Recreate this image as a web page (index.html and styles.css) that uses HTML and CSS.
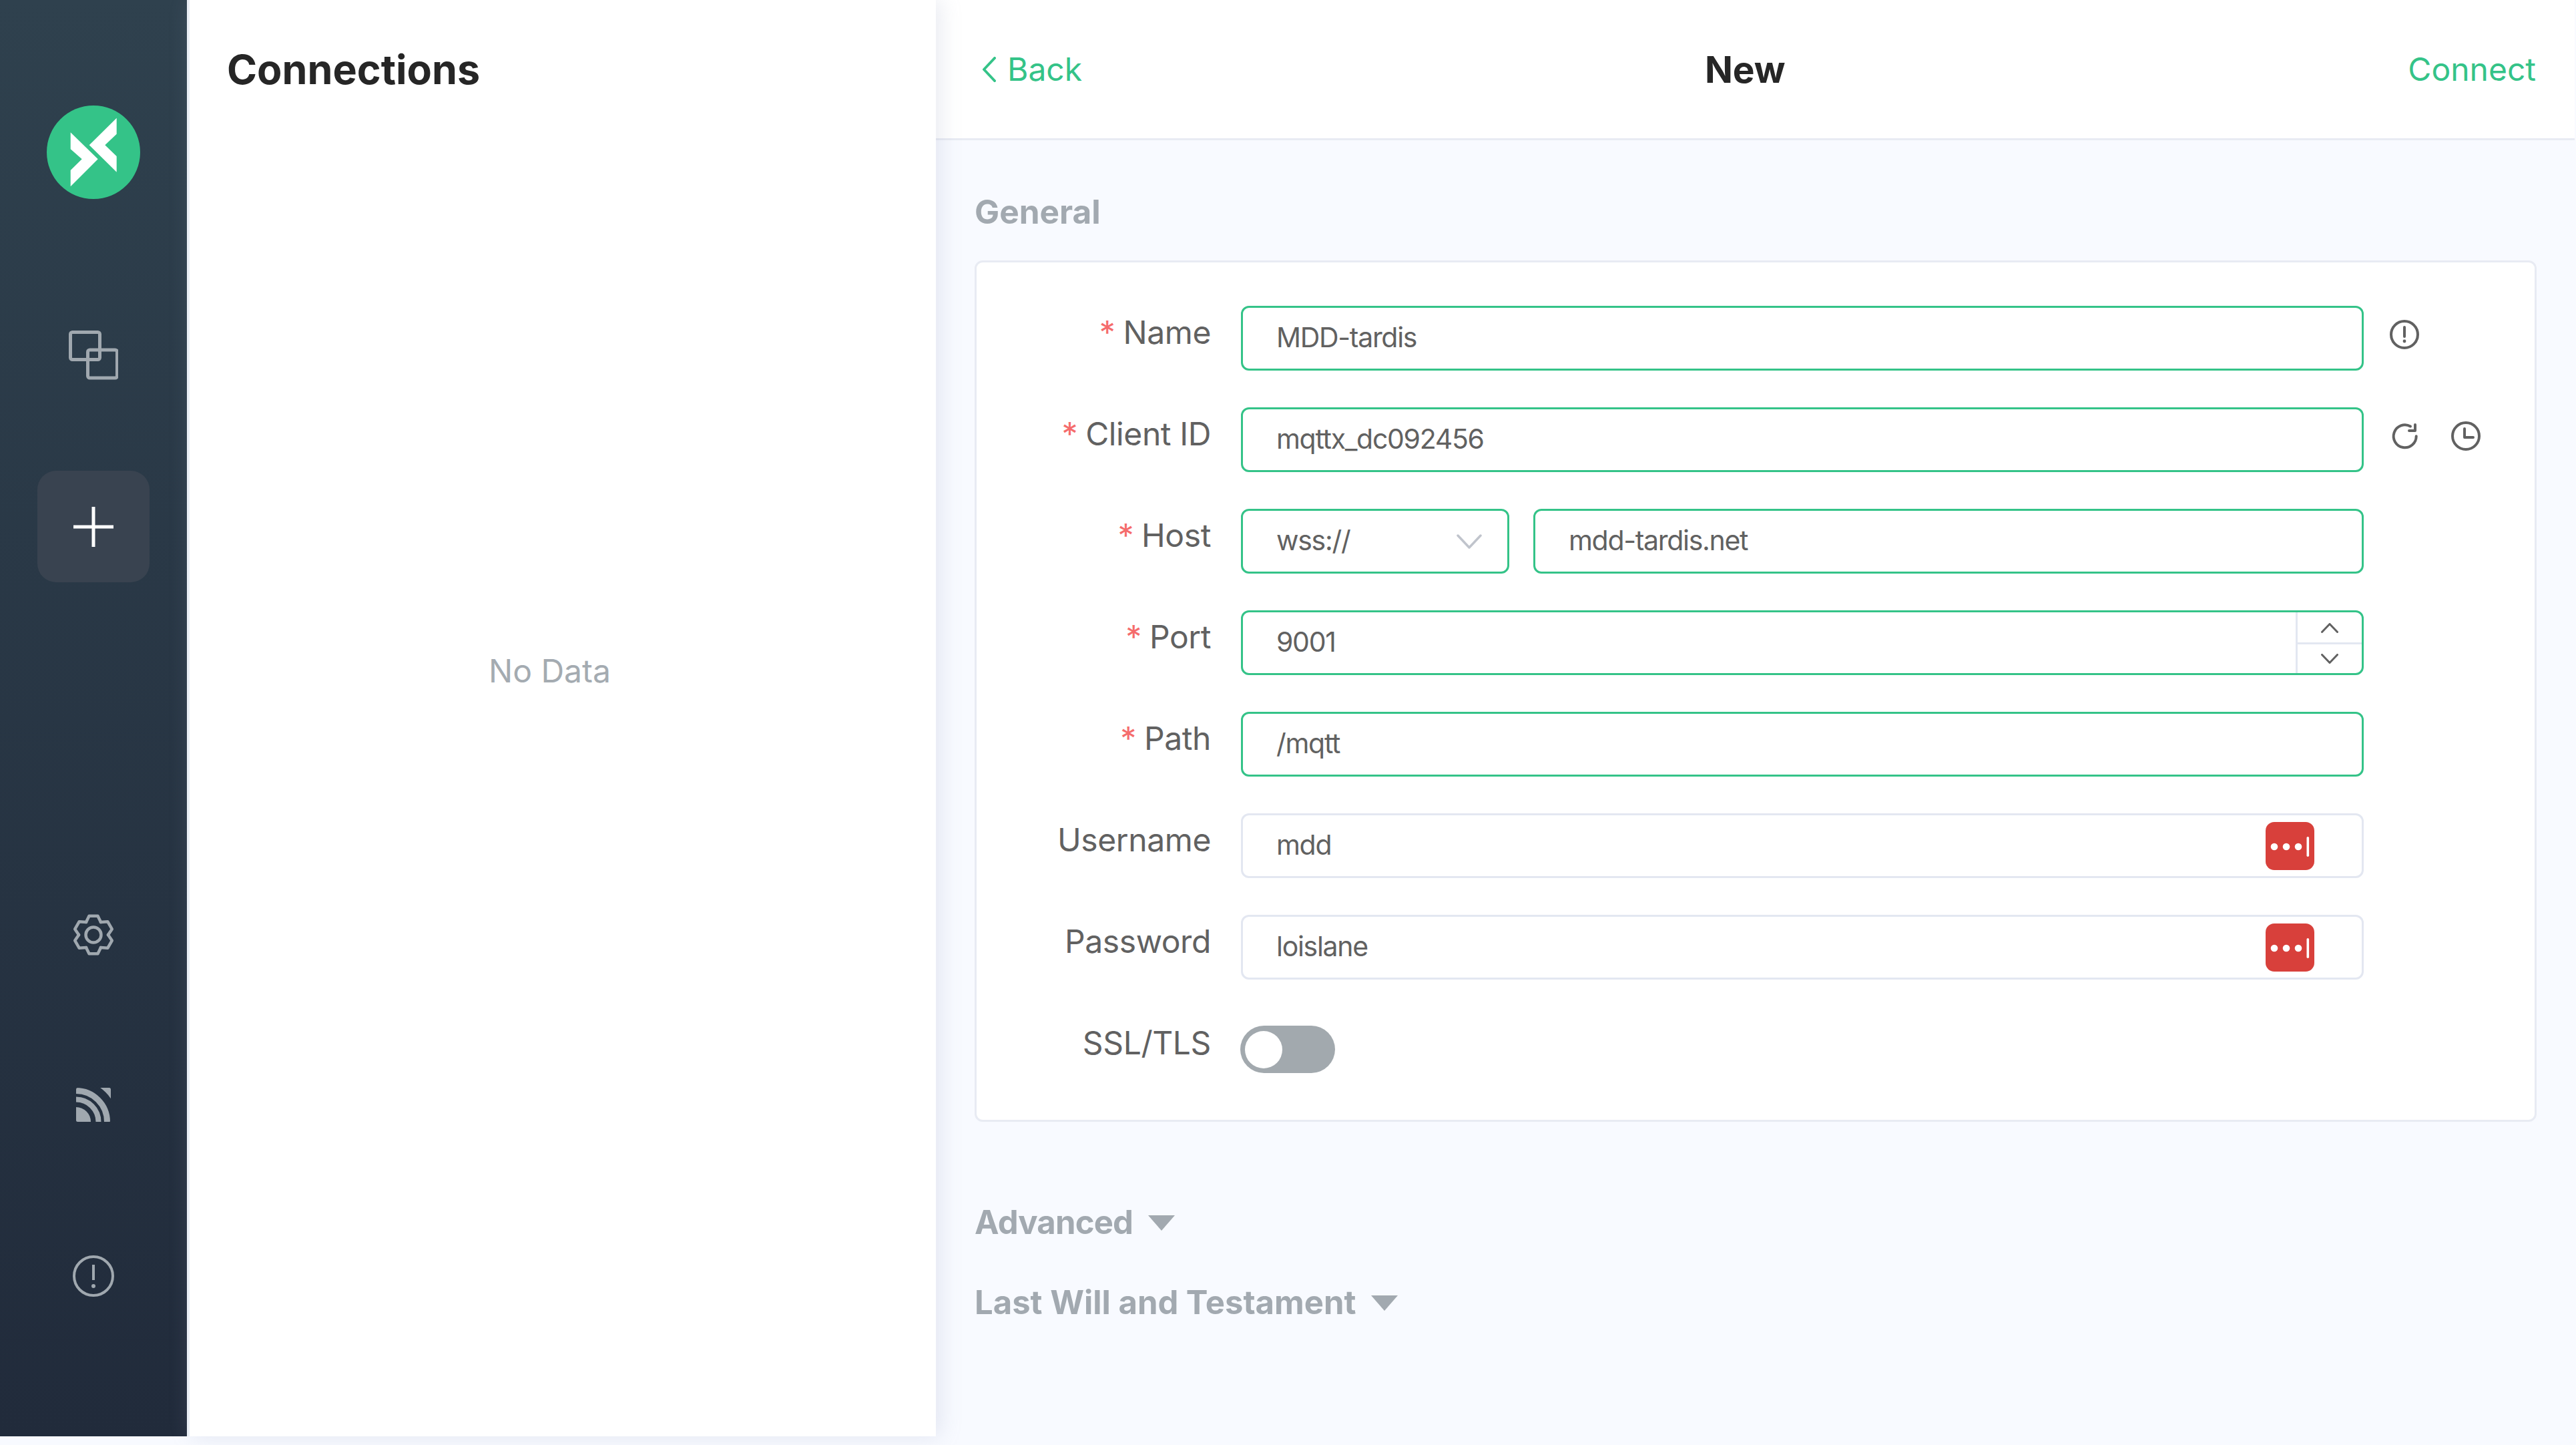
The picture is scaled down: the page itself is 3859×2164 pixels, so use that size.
FILE: index.html
```html
<!DOCTYPE html>
<html lang="en">
<head>
<meta charset="utf-8">
<title>MQTTX</title>
<link rel="stylesheet" href="styles.css">
</head>
<body>
<div class="app">
  <nav class="sidebar">
    <svg class="logo" viewBox="0 0 140 140" aria-label="MQTTX">
      <circle cx="70" cy="70" r="70" fill="#34c388"/>
      <polygon fill="#fff" points="35.7,40.3 76.7,80.3 35.7,121.3 35.7,97 52.7,80.3 35.7,65.3"/>
      <polygon fill="#fff" points="104.7,18.7 104.7,42.7 87.3,59.3 104.7,76 104.7,99.7 63.7,59.3"/>
    </svg>
    <svg class="nav-icon copy-icon" viewBox="0 0 74 74">
      <rect x="2.5" y="2.5" width="44" height="41" rx="3"/>
      <rect x="28.5" y="29" width="44" height="42" rx="3"/>
    </svg>
    <div class="add-btn">
      <svg class="plus" viewBox="0 0 60 60"><path d="M30 0V60M0 30H60"/></svg>
    </div>
    <div class="nav-bottom">
      <svg class="nav-icon gear" viewBox="-32 -32 64 64">
        <g>
          <path d="M-11-19L-6.5-28.3H6.5L11-19"/>
          <path d="M-11-19L-6.5-28.3H6.5L11-19" transform="rotate(60)"/>
          <path d="M-11-19L-6.5-28.3H6.5L11-19" transform="rotate(120)"/>
          <path d="M-11-19L-6.5-28.3H6.5L11-19" transform="rotate(180)"/>
          <path d="M-11-19L-6.5-28.3H6.5L11-19" transform="rotate(240)"/>
          <path d="M-11-19L-6.5-28.3H6.5L11-19" transform="rotate(300)"/>
        </g>
        <circle r="11.5"/>
      </svg>
      <svg class="rss" viewBox="0 0 52 51">
        <defs><clipPath id="rss-clip"><rect width="52" height="51" rx="2.5"/></clipPath></defs>
        <g clip-path="url(#rss-clip)">
          <circle cx="0" cy="51" r="22" fill="#a0a8af"/>
          <g fill="none" stroke="#a0a8af">
            <circle cx="0" cy="51" r="33.5" stroke-width="8"/>
            <circle cx="0" cy="51" r="46.5" stroke-width="9"/>
            <circle cx="0" cy="51" r="82.5" stroke-width="40"/>
          </g>
        </g>
      </svg>
      <svg class="nav-icon info" viewBox="0 0 62 62">
        <circle cx="31" cy="31" r="29"/>
        <path d="M31 14V37"/>
        <circle class="dot" cx="31" cy="46" r="3"/>
      </svg>
    </div>
  </nav>

  <aside class="list-panel">
    <h1 class="list-title">Connections</h1>
    <div class="empty">No Data</div>
  </aside>

  <main class="main">
    <header class="topbar">
      <a class="back">
        <svg class="back-icon" viewBox="0 0 20 38"><path d="M18 2L2 19L18 36"/></svg>
        <span>Back</span>
      </a>
      <div class="top-title">New</div>
      <a class="connect">Connect</a>
    </header>
    <div class="content">
      <h2 class="section-title">General</h2>
      <section class="card">
        <div class="row">
          <label class="label"><span class="star">*</span>Name</label>
          <div class="input valid">MDD-tardis</div>
          <div class="aux">
            <svg class="aux-icon" viewBox="0 0 44 44">
              <circle cx="22" cy="22" r="20"/>
              <path d="M22 11V25"/>
              <circle class="dot" cx="22" cy="32" r="2.4"/>
            </svg>
          </div>
        </div>
        <div class="row">
          <label class="label"><span class="star">*</span>Client ID</label>
          <div class="input valid">mqttx_dc092456</div>
          <div class="aux">
            <svg class="aux-icon" viewBox="0 0 44 44">
              <path d="M31 7.5A17 17 0 1 0 39.7 22.3"/>
              <path d="M38 5V14H29"/>
            </svg>
            <svg class="aux-icon" viewBox="0 0 44 44">
              <circle cx="22" cy="22" r="20"/>
              <path d="M20 11V24H33"/>
            </svg>
          </div>
        </div>
        <div class="row">
          <label class="label"><span class="star">*</span>Host</label>
          <div class="host">
            <div class="input valid select">
              <span>wss://</span>
              <svg class="select-arrow" viewBox="0 0 38 22"><path d="M2 2L19 20L36 2"/></svg>
            </div>
            <div class="input valid grow">mdd-tardis.net</div>
          </div>
        </div>
        <div class="row">
          <label class="label"><span class="star">*</span>Port</label>
          <div class="input valid port">
            <span>9001</span>
            <div class="spinner">
              <div class="spin-btn spin-up"><svg class="spin-icon" viewBox="0 0 26 15"><path d="M1.5 13.5L13 1.5L24.5 13.5"/></svg></div>
              <div class="spin-btn spin-down"><svg class="spin-icon" viewBox="0 0 26 15"><path d="M1.5 1.5L13 13.5L24.5 1.5"/></svg></div>
            </div>
          </div>
        </div>
        <div class="row">
          <label class="label"><span class="star">*</span>Path</label>
          <div class="input valid">/mqtt</div>
        </div>
        <div class="row">
          <label class="label">Username</label>
          <div class="input filler">
            <span>mdd</span>
            <svg class="lastpass" viewBox="0 0 73 72">
              <rect width="73" height="72" rx="13" fill="#d8403b"/>
              <circle cx="13" cy="37" r="5.3" fill="#fff"/><circle cx="31" cy="37" r="5.3" fill="#fff"/><circle cx="49" cy="37" r="5.3" fill="#fff"/>
              <rect x="61.5" y="22" width="3.6" height="30" rx="1.8" fill="#fff"/>
            </svg>
          </div>
        </div>
        <div class="row">
          <label class="label">Password</label>
          <div class="input filler">
            <span>loislane</span>
            <svg class="lastpass" viewBox="0 0 73 72">
              <rect width="73" height="72" rx="13" fill="#d8403b"/>
              <circle cx="13" cy="37" r="5.3" fill="#fff"/><circle cx="31" cy="37" r="5.3" fill="#fff"/><circle cx="49" cy="37" r="5.3" fill="#fff"/>
              <rect x="61.5" y="22" width="3.6" height="30" rx="1.8" fill="#fff"/>
            </svg>
          </div>
        </div>
        <div class="row row-last">
          <label class="label">SSL/TLS</label>
          <div class="toggle"><div class="knob"></div></div>
        </div>
      </section>
      <div class="collapse first">
        <span>Advanced</span><span class="tri"></span>
      </div>
      <div class="collapse">
        <span>Last Will and Testament</span><span class="tri"></span>
      </div>
    </div>
  </main>
</div>
</body>
</html>
```
FILE: styles.css
```css
* { box-sizing: border-box; }
html, body { margin: 0; height: 100%; }
body {
  background: #f8faff;
  font-family: Inter, "Liberation Sans", sans-serif;
  overflow: hidden;
}
.app { display: flex; height: 2151px; }

.sidebar {
  width: 280px;
  flex: none;
  display: flex;
  flex-direction: column;
  align-items: center;
  background: linear-gradient(180deg, #2f414e 0%, #212b3b 100%);
  padding-top: 158px;
}
.logo { width: 140px; height: 140px; display: block; }
.nav-icon { fill: none; stroke: #a0a8af; display: block; }
.copy-icon { width: 74px; height: 74px; margin-top: 197px; stroke-width: 5; }
.add-btn {
  width: 168px;
  height: 167px;
  margin-top: 136px;
  border-radius: 28px;
  background: #394350;
  display: flex;
  align-items: center;
  justify-content: center;
}
.plus { width: 60px; height: 60px; fill: none; stroke: #fff; stroke-width: 5; }
.nav-bottom {
  display: flex;
  flex-direction: column;
  align-items: center;
  margin-top: 496px;
}
.gear { width: 64px; height: 64px; stroke-width: 4.5; stroke-linejoin: round; stroke-linecap: round; }
.rss { width: 52px; height: 51px; display: block; margin-top: 197px; }
.info { width: 62px; height: 62px; margin-top: 200px; stroke-width: 4; }
.info .dot { fill: #a0a8af; stroke: none; }

.list-panel {
  width: 1122px;
  flex: none;
  background: #fff;
  border-left: 4px solid #e9eef5;
  position: relative;
  display: flex;
  flex-direction: column;
  box-shadow: 6px 0 30px rgba(150, 160, 190, 0.22);
  z-index: 1;
  padding: 64px 0 0 56px;
}
.list-title {
  margin: 0;
  font-size: 61px;
  line-height: 80px;
  font-weight: 700;
  color: #262626;
}
.empty {
  position: absolute;
  top: 976px;
  left: 448px;
  font-size: 48px;
  line-height: 58px;
  color: #a4abb1;
}

.main { flex: 1; min-width: 0; margin-right: 2px; }
.topbar {
  height: 210px;
  background: #fff;
  border-bottom: 3px solid #e8ebf3;
  display: flex;
  justify-content: space-between;
  align-items: center;
  padding: 0 58px 0 70px;
  font-size: 48px;
}
.back { display: flex; align-items: center; color: #34c388; }
.back-icon { width: 20px; height: 38px; margin-right: 17px; fill: none; stroke: #34c388; stroke-width: 4; stroke-linecap: round; stroke-linejoin: round; }
.top-title { font-weight: 700; font-size: 55px; color: #262626; }
.connect { color: #34c388; }

.content { padding: 0 57px 0 58px; }
.section-title {
  margin: 0;
  padding-top: 76px;
  height: 180px;
  font-size: 49.5px;
  line-height: 62px;
  font-weight: 700;
  color: #a2a9b0;
}
.card {
  background: #fff;
  border: 3px solid #e8ebf3;
  border-radius: 12px;
  padding: 65px 0 0;
  height: 1290px;
}
.row { display: flex; height: 97px; margin-bottom: 55px; }
.label {
  width: 351px;
  flex: none;
  margin-right: 45px;
  text-align: right;
  font-size: 48px;
  letter-spacing: -0.4px;
  line-height: 80px;
  color: #616161;
}
.star { color: #f56c6c; margin-right: 12px; }
.input {
  width: 1682px;
  flex: none;
  height: 97px;
  border: 3px solid #e3e7f1;
  border-radius: 12px;
  background: #fff;
  padding: 0 0 3px 50px;
  font-size: 41px;
  letter-spacing: -1.3px;
  color: #616161;
  display: flex;
  align-items: center;
  justify-content: space-between;
}
.input.valid { border-color: #34c388; }
.host { width: 1682px; display: flex; gap: 36px; }
.select { width: 402px; padding-right: 38px; padding-bottom: 0; }
.select > span { padding-bottom: 3px; }
.grow { width: auto; flex: 1; justify-content: flex-start; }
.select-arrow { width: 38px; height: 22px; fill: none; stroke: #c0c4cc; stroke-width: 3.5; stroke-linecap: round; stroke-linejoin: round; }
.port { padding-right: 0; padding-bottom: 0; }
.port > span { padding-bottom: 3px; }
.spinner {
  width: 99px;
  height: 100%;
  border-left: 3px solid #e3e7f1;
  display: flex;
  flex-direction: column;
}
.spin-btn { flex: 1; display: flex; align-items: center; justify-content: center; }
.spin-up { padding-top: 2px; }
.spin-down { border-top: 3px solid #e3e7f1; }
.spin-icon { width: 26px; height: 15px; fill: none; stroke: #616161; stroke-width: 3; stroke-linecap: round; stroke-linejoin: round; }
.filler { padding-right: 71px; padding-bottom: 0; }
.filler > span { padding-bottom: 3px; }
.lastpass { width: 73px; height: 72px; flex: none; }
.aux { display: flex; gap: 48px; margin-left: 39px; padding-top: 21px; }
.aux-icon { width: 44px; height: 44px; fill: none; stroke: #616161; stroke-width: 4; stroke-linecap: round; stroke-linejoin: round; }
.aux-icon .dot { fill: #616161; stroke: none; }
.toggle {
  width: 142px;
  height: 71px;
  margin: 14px 0 0 -1px;
  border-radius: 36px;
  background: #a2a9ae;
  padding: 8px 0 0 7px;
}
.knob { width: 56px; height: 56px; border-radius: 50%; background: #fff; }
.collapse {
  display: flex;
  align-items: center;
  font-size: 49px;
  line-height: 62px;
  font-weight: 700;
  color: #a2a9b0;
  margin-top: 58px;
}
.collapse.first { margin-top: 120px; letter-spacing: -0.8px; }
.tri {
  width: 0;
  height: 0;
  margin-left: 23px;
  border-left: 20px solid transparent;
  border-right: 20px solid transparent;
  border-top: 23px solid #a2a9b0;
}
```
